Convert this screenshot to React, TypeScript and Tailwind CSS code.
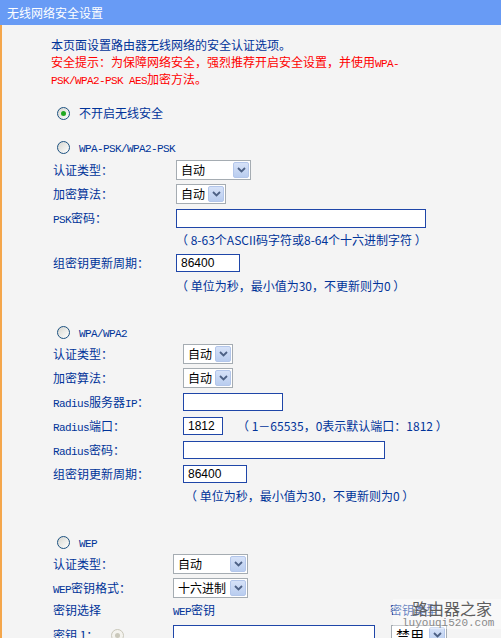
import type { ReactNode } from "react";

// ascii bits in the old router pages render in a narrow fixed-width face
function M({ children }: { children: ReactNode }) {
  return (
    <span className="[font-family:'Liberation_Mono',monospace] text-[11px] leading-[10px] tracking-[-0.6px]">{children}</span>
  );
}

function Radio({ checked = false, disabled = false }: { checked?: boolean; disabled?: boolean }) {
  return (
    <span
      className={[
        "flex h-[13px] w-[13px] shrink-0 items-center justify-center rounded-full border",
        disabled
          ? "border-[#c9c7ba] bg-[#f4f3ee]"
          : "border-[#1c5180] bg-[linear-gradient(135deg,#d6d6d0,#ffffff)]",
      ].join(" ")}
    >
      {checked && (
        <span className={["h-[5px] w-[5px] rounded-full", disabled ? "bg-[#cac8bb]" : "bg-[#22a822]"].join(" ")} />
      )}
    </span>
  );
}

function Select({ value, w, text = "text-[12px]" }: { value: string; w: string; text?: string }) {
  return (
    <div className={`flex h-[20px] shrink-0 items-stretch border border-[#a5acb2] bg-white ${w}`}>
      <span className={`flex-1 overflow-hidden whitespace-nowrap pl-[4px] leading-[18px] text-black ${text}`}>{value}</span>
      <span className="m-px flex w-[16px] items-center justify-center rounded-[2px] border border-[#b3c6ea] bg-[linear-gradient(#d6e2f8,#b9cdef)]">
        <svg width="9" height="6" viewBox="0 0 9 6">
          <path d="M1 1l3.5 3.5L8 1" stroke="#4d6185" strokeWidth="1.8" fill="none" />
        </svg>
      </span>
    </div>
  );
}

function Field({ w, h = "h-[18px]", value = "" }: { w: string; h?: string; value?: string }) {
  return (
    <div
      className={`${w} ${h} shrink-0 border border-[#1f46a8] bg-white pl-[4px] text-[12px] leading-[16px] text-black [font-family:'Liberation_Sans',sans-serif]`}
    >
      {value}
    </div>
  );
}

function Row({ label, lw, h = "h-[24px]", children }: { label?: ReactNode; lw: string; h?: string; children?: ReactNode }) {
  return (
    <div className={`flex items-center ${h}`}>
      <div className={`${lw} shrink-0 whitespace-nowrap`}>{label}</div>
      {children}
    </div>
  );
}

function RadioRow({ checked, children, mt }: { checked?: boolean; children: ReactNode; mt: string }) {
  return (
    <div className={`flex h-[20px] items-center pl-[4px] ${mt}`}>
      <Radio checked={checked} />
      <span className="ml-[9px] whitespace-nowrap">{children}</span>
    </div>
  );
}

export default function App() {
  return (
    <div className="relative h-[638px] w-[501px] overflow-hidden bg-[#f4f4f4] text-[12px] text-[#003399] [font-family:'Noto_Sans_CJK_SC',sans-serif]">
      <div className="h-[25px] bg-[#689bf5] pl-[7px] text-[12px] leading-[25px] text-white">无线网络安全设置</div>

      <div className="h-[613px] border-l-2 border-[#f4a64b] pl-[51px] pt-[11px]">
        <div className="-ml-[2px] leading-[17px]">
          <div className="h-[17px]">本页面设置路由器无线网络的安全认证选项。</div>
          <div className="text-[#ff0000]">
            <div className="h-[17px]">
              安全提示：为保障网络安全，强烈推荐开启安全设置，并使用<M>WPA-</M>
            </div>
            <div className="h-[17px]">
              <M>PSK/WPA2-PSK AES</M>加密方法。
            </div>
          </div>
        </div>

        <RadioRow checked mt="mt-[16px]">不开启无线安全</RadioRow>

        {/* WPA-PSK/WPA2-PSK */}
        <RadioRow mt="mt-[14px]">
          <M>WPA-PSK/WPA2-PSK</M>
        </RadioRow>
        <div className="mt-px">
          <Row label="认证类型：" lw="w-[123px]">
            <Select value="自动" w="w-[75px]" />
          </Row>
          <Row label="加密算法：" lw="w-[123px]">
            <Select value="自动" w="w-[50px]" />
          </Row>
          <Row label={<><M>PSK</M>密码：</>} lw="w-[123px]">
            <Field w="w-[250px]" h="h-[19px]" />
          </Row>
          <Row lw="w-[123px]" h="h-[20px]">
            <span className="whitespace-nowrap">（ 8-63个ASCII码字符或8-64个十六进制字符 ）</span>
          </Row>
          <Row label="组密钥更新周期：" lw="w-[123px]" h="h-[26px]">
            <Field w="w-[64px]" value="86400" />
          </Row>
          <Row lw="w-[123px]" h="h-[20px]">
            <span className="whitespace-nowrap">（ 单位为秒，最小值为30，不更新则为0 ）</span>
          </Row>
        </div>

        {/* WPA/WPA2 */}
        <RadioRow mt="mt-[26px]">
          <M>WPA/WPA2</M>
        </RadioRow>
        <Row label="认证类型：" lw="w-[130px]">
          <Select value="自动" w="w-[50px]" />
        </Row>
        <Row label="加密算法：" lw="w-[130px]">
          <Select value="自动" w="w-[50px]" />
        </Row>
        <Row label={<><M>Radius</M>服务器<M>IP</M>：</>} lw="w-[130px]">
          <Field w="w-[100px]" />
        </Row>
        <Row label={<><M>Radius</M>端口：</>} lw="w-[130px]">
          <Field w="w-[40px]" value="1812" />
          <span className="ml-[14px] whitespace-nowrap">（ 1－65535，0表示默认端口：1812 ）</span>
        </Row>
        <Row label={<><M>Radius</M>密码：</>} lw="w-[130px]">
          <Field w="w-[202px]" />
        </Row>
        <Row label="组密钥更新周期：" lw="w-[130px]">
          <Field w="w-[64px]" value="86400" />
        </Row>
        <Row lw="w-[132px]" h="h-[20px]">
          <span className="whitespace-nowrap">（ 单位为秒，最小值为30，不更新则为0 ）</span>
        </Row>

        {/* WEP */}
        <RadioRow mt="mt-[26px]">
          <M>WEP</M>
        </RadioRow>
        <Row label="认证类型：" lw="w-[120px]">
          <Select value="自动" w="w-[75px]" />
        </Row>
        <Row label={<><M>WEP</M>密钥格式：</>} lw="w-[120px]">
          <Select value="十六进制" w="w-[75px]" />
        </Row>
        <Row label="密钥选择" lw="w-[120px]" h="h-[20px]">
          <span className="w-[217px] shrink-0">
            <M>WEP</M>密钥
          </span>
          <span>密钥类型</span>
        </Row>
        <div className="mt-[3px] flex h-[24px] items-center">
          <div className="flex w-[120px] shrink-0 items-center">
            <span className="w-[58px] whitespace-nowrap">密钥 1：</span>
            <Radio checked disabled />
          </div>
          <Field w="w-[202px]" h="h-[20px]" />
          <div className="ml-[16px]">
            <Select value="禁用" w="w-[56px]" text="text-[14px]" />
          </div>
        </div>
      </div>

      {/* site watermark */}
      <div className="absolute left-[393px] top-[599px] flex h-[30px] w-[108px] flex-col items-start bg-white/40 pl-[9px]">
        <span className="pl-[10px] text-[16px] leading-[18px] text-[#5e5e5e]">路由器之家</span>
        <span className="text-[11px] leading-[12px] text-[#8a8a8a] [font-family:'Liberation_Mono',monospace]">luyouqi520.com</span>
      </div>
    </div>
  );
}
